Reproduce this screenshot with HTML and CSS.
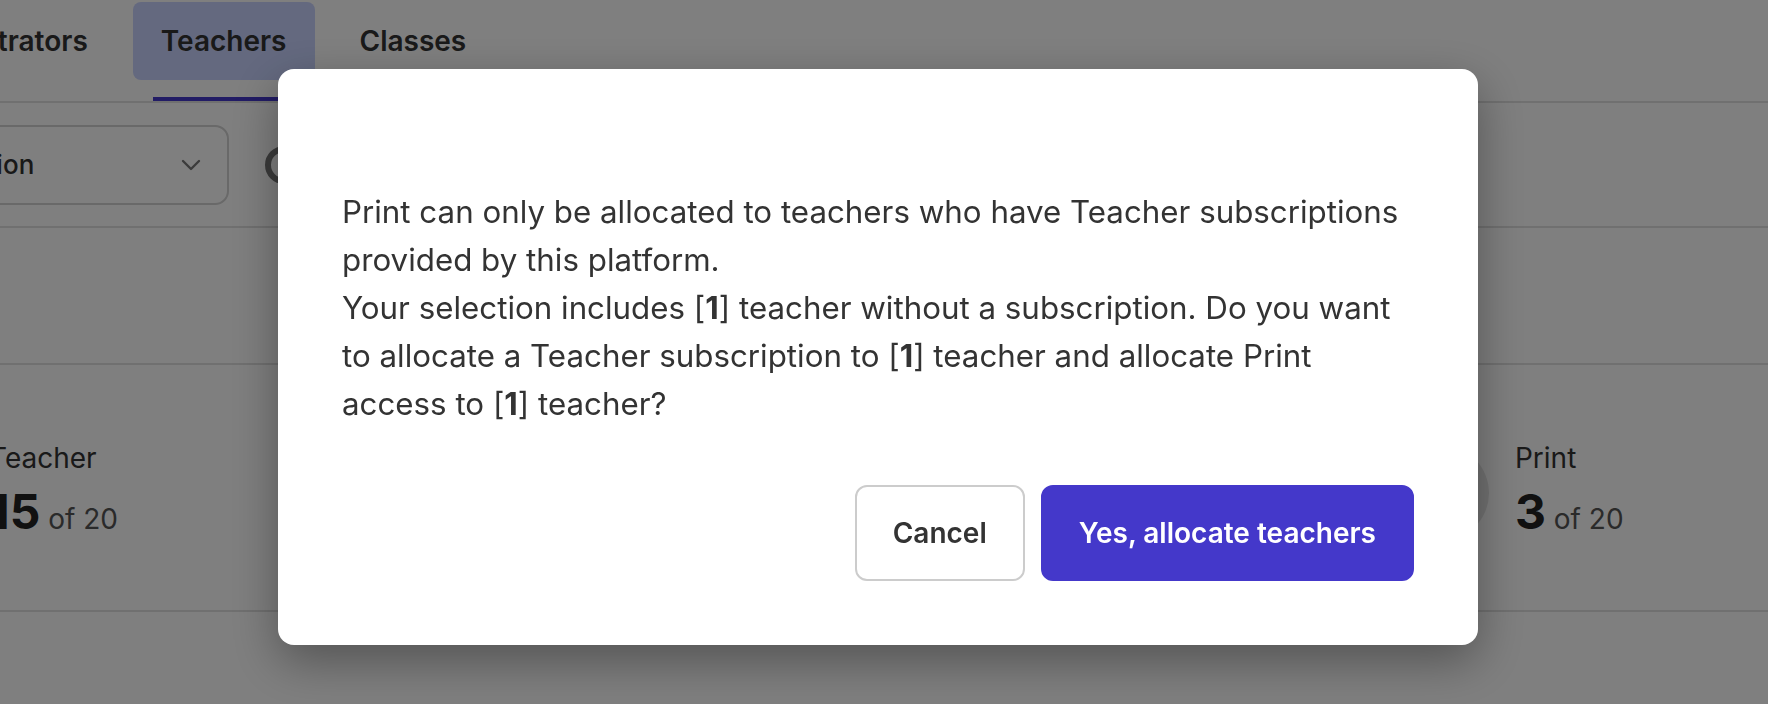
FILE: index.html
```html
<!DOCTYPE html>
<html lang="en">
<head>
  <meta charset="UTF-8" />
  <meta name="viewport" content="width=device-width, initial-scale=1.0"/>
  <title>Allocate Print access</title>
  <link rel="stylesheet" href="styles.css">
</head>
<body>
  <div class="page">
    <nav class="tabs">
      <a class="tab" href="#">Administrators</a>
      <a class="tab active" href="#">Teachers</a>
      <a class="tab" href="#">Classes</a>
    </nav>

    <div class="toolbar">
      <div class="select">
        <span>Subscription</span>
        <svg class="chevron" viewBox="0 0 20 12" width="20" height="12">
          <path d="M2 2l8 8 8-8" fill="none" stroke="currentColor" stroke-width="2.4" stroke-linecap="round" stroke-linejoin="round"/>
        </svg>
      </div>
      <span class="loader"></span>
    </div>

    <div class="filters"></div>

    <div class="stats">
      <div class="stat">
        <span class="stat-icon"></span>
        <div>
          <div class="stat-name">Teacher</div>
          <div class="stat-count"><strong>15</strong> of 20</div>
        </div>
      </div>
      <div class="stat">
        <span class="stat-icon"></span>
        <div>
          <div class="stat-name">Student</div>
          <div class="stat-count"><strong>240</strong> of 300</div>
        </div>
      </div>
      <div class="stat">
        <span class="stat-icon"></span>
        <div>
          <div class="stat-name">Digital</div>
          <div class="stat-count"><strong>8</strong> of 20</div>
        </div>
      </div>
      <div class="stat">
        <span class="stat-icon"></span>
        <div>
          <div class="stat-name">Print</div>
          <div class="stat-count"><strong>3</strong> of 20</div>
        </div>
      </div>
    </div>
  </div>

  <div class="overlay">
    <div class="modal" role="dialog" aria-modal="true">
      <p class="modal-text">
        Print can only be allocated to teachers who have Teacher subscriptions provided by this platform.<br>
        Your selection includes [<b>1</b>] teacher without a subscription. Do you want to allocate a Teacher subscription to [<b>1</b>] teacher and allocate Print access to [<b>1</b>] teacher?
      </p>
      <div class="modal-actions">
        <button type="button" class="btn btn-secondary">Cancel</button>
        <button type="button" class="btn btn-primary">Yes, allocate teachers</button>
      </div>
    </div>
  </div>
</body>
</html>
```

FILE: styles.css
```css
* {
  box-sizing: border-box;
}

body {
  margin: 0;
  overflow: hidden;
  background: #fff;
  color: #333;
  font-family: Inter, "Noto Sans", sans-serif;
}

.page {
  margin-left: -140px;
  width: 2100px;
}

/* tabs */
.tabs {
  display: flex;
  gap: 17px;
  height: 103px;
  border-bottom: 2px solid #e0e0e0;
}

.tab {
  position: relative;
  height: 78px;
  margin-top: 2px;
  padding: 0 28px;
  line-height: 78px;
  border-radius: 8px;
  font-size: 28px;
  font-weight: 600;
  color: #333;
  text-decoration: none;
}

.tab.active {
  background: #c8d3ff;
}

.tab.active::after {
  content: "";
  position: absolute;
  left: 20px;
  right: 20px;
  top: 95px;
  height: 4px;
  background: #4438ca;
}

/* toolbar */
.toolbar {
  display: flex;
  align-items: center;
  gap: 36px;
  height: 125px;
  border-bottom: 2px solid #e0e0e0;
}

.select {
  display: flex;
  align-items: center;
  justify-content: space-between;
  width: 369px;
  height: 80px;
  padding: 0 26px 0 15px;
  border: 2px solid #d2d2d2;
  border-radius: 14px;
  font-size: 26px;
  font-weight: 500;
  color: #333;
}

.chevron {
  color: #777;
}

.loader {
  width: 38px;
  height: 38px;
  border: 6px solid #777;
  border-radius: 50%;
}

.filters {
  height: 137px;
  border-bottom: 2px solid #e0e0e0;
}

/* stats */
.stats {
  display: grid;
  grid-template-columns: repeat(4, 508.67px);
  align-items: center;
  height: 247px;
  padding-top: 11px;
  padding-left: 7px;
  border-bottom: 2px solid #e0e0e0;
}

.stat {
  display: flex;
  align-items: center;
  gap: 26px;
}

.stat-icon {
  width: 96px;
  height: 96px;
  border-radius: 50%;
  background: #e5e5e5;
}

.stat-name {
  font-size: 28px;
  line-height: 39px;
  color: #333;
}

.stat-count {
  margin-top: 5px;
  font-size: 28px;
  line-height: 58px;
  color: #555;
}

.stat-count strong {
  font-size: 48px;
  font-weight: 700;
  color: #222;
}

/* dialog */
.overlay {
  position: fixed;
  inset: 0;
  display: flex;
  align-items: center;
  justify-content: center;
  background: rgba(0, 0, 0, 0.5);
}

.modal {
  width: 1200px;
  margin: 10px 12px 0 0;
  padding: 119px 64px 64px;
  background: #fff;
  border-radius: 16px;
  box-shadow: 0 16px 48px rgba(0, 0, 0, 0.35);
}

.modal-text {
  margin: 0 0 57px;
  font-size: 31.3px;
  line-height: 48px;
  color: #333;
}

.modal-text b {
  font-weight: 700;
}

.modal-actions {
  display: flex;
  justify-content: flex-end;
  gap: 16px;
}

.btn {
  height: 96px;
  padding: 0 36px;
  border: 2px solid #ccc;
  border-radius: 12px;
  font-family: inherit;
  font-size: 28px;
  font-weight: 600;
  cursor: pointer;
}

.btn-secondary {
  background: #fff;
  color: #333;
}

.btn-primary {
  border-color: #4438ca;
  background: #4438ca;
  color: #fff;
}
```
